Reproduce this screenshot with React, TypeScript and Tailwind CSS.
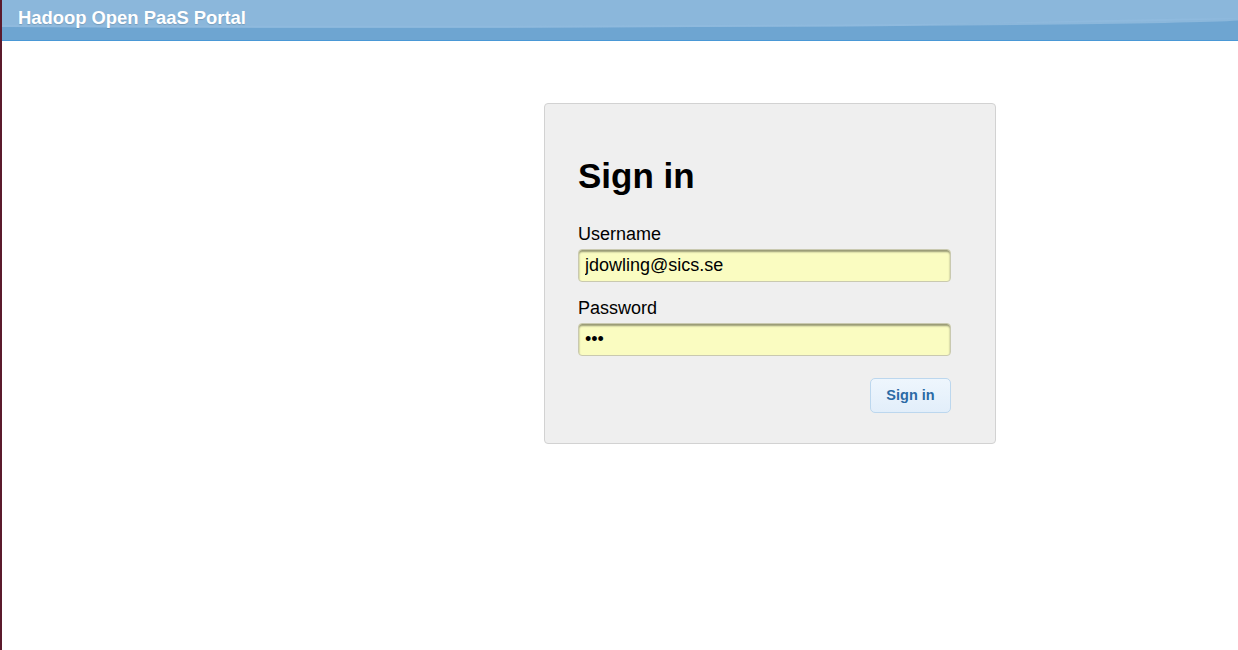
import React from 'react'

const FONT = { fontFamily: '"Liberation Sans", Arial, sans-serif' }

function Header() {
  return (
    <div className="relative h-[41px] bg-[#8bb7db] border-b border-[#4a98d6] overflow-hidden">
      {/* wave band */}
      <svg
        className="absolute inset-0 w-full h-full"
        viewBox="0 0 1238 40"
        preserveAspectRatio="none"
      >
        <path d="M0 27 Q 500 29 900 26 T 1238 18 V40 H0 Z" fill="#6ea5d1" />
        <path d="M0 25 Q 500 27 900 24 T 1238 16 V18 Q 1100 19 900 26 Q 500 29 0 27 Z" fill="#93bde0" opacity="0.6" />
      </svg>
      <div className="relative pl-[16px] pt-[7px] text-[18.4px] leading-[22px] font-bold text-white [text-shadow:0_1px_1px_rgba(0,0,0,0.15)]">
        Hadoop Open PaaS Portal
      </div>
    </div>
  )
}

function Field({ label, value, type }: { label: string; value: string; type: string }) {
  return (
    <div className="flex flex-col">
      <label className="text-[18px] leading-[22px] text-black">{label}</label>
      <input
        type={type}
        defaultValue={value}
        readOnly
        className="mt-[4px] w-[373px] h-[33px] px-[6px] text-[18px] text-black bg-[#fafcc1] border border-[#c9c9b0] rounded-[4px] outline-none shadow-[inset_0_2px_2px_rgba(0,0,0,0.4)]"
        style={FONT}
      />
    </div>
  )
}

export default function App() {
  return (
    <div className="min-h-[650px] bg-white border-l-2 border-[#5b1a2c]" style={FONT}>
      <Header />
      <div className="ml-[542px] mt-[62px] w-[452px] bg-[#efefef] border border-[#d2d2d2] rounded-[4px] pl-[33px] pr-[44px] pt-[52px] pb-[30px]">
        <h1 className="text-[35px] leading-[40px] font-bold text-black">Sign in</h1>
        <div className="mt-[27px]">
          <Field label="Username" value="jdowling@sics.se" type="text" />
        </div>
        <div className="mt-[15px]">
          <Field label="Password" value="abc" type="password" />
        </div>
        <div className="flex justify-end mt-[22px]">
          <button
            className="w-[81px] h-[35px] rounded-[5px] border border-[#bcd7ee] bg-gradient-to-b from-[#eef6fd] to-[#e2eefa] text-[14.5px] font-bold text-[#2b6aa5]"
            style={FONT}
          >
            Sign in
          </button>
        </div>
      </div>
    </div>
  )
}
